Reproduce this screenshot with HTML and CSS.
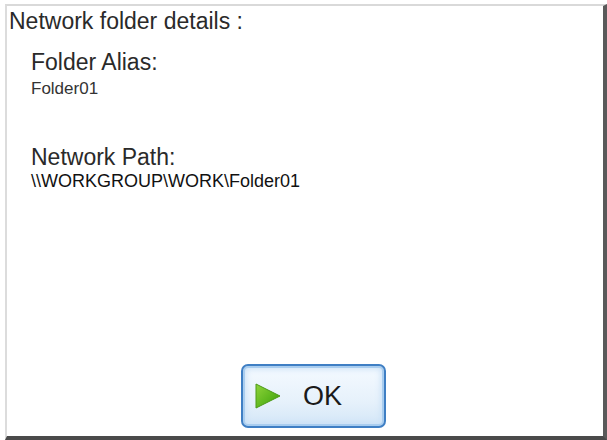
FILE: index.html
```html
<!DOCTYPE html>
<html lang="en">
<head>
    <meta charset="UTF-8">
    <meta name="viewport" content="width=device-width, initial-scale=1.0">
    <title>Network folder details</title>
    <link rel="stylesheet" href="styles.css">
</head>
<body>

    <div class="dialog">
        <h4 class="dialog-title">Network folder details :</h4>

        <div class="detail-group">
            <p class="detail-label">Folder Alias:</p>
            <p class="detail-value">Folder01</p>
        </div>

        <div class="detail-group path-group">
            <p class="detail-label">Network Path:</p>
            <p class="detail-value path-value">\\WORKGROUP\WORK\Folder01</p>
        </div>

        <div class="btn-container">
            <button class="ok-btn">
                <svg class="ok-icon" width="28" height="26" viewBox="0 0 28 26">
                    <defs>
                        <linearGradient id="playGrad" x1="0" y1="0" x2="1" y2="1">
                            <stop offset="0" stop-color="#8fd43a"/>
                            <stop offset="0.6" stop-color="#5bb51c"/>
                            <stop offset="1" stop-color="#3d8f10"/>
                        </linearGradient>
                    </defs>
                    <polygon points="2,1 26,13 2,25" fill="url(#playGrad)" stroke="#4c9a18" stroke-width="1" stroke-linejoin="round"/>
                </svg>
                <span class="ok-text">OK</span>
            </button>
        </div>
    </div>

</body>
</html>
```

FILE: styles.css
```css
body {
    margin: 0;
    background: white;
    font-family: "Liberation Sans", Arial, sans-serif;
    color: #222;
}

.dialog {
    box-sizing: border-box;
    width: 602px;
    height: 436px;
    margin: 4px 0 0 5px;
    border-top: 2px solid #d9d9d9;
    border-left: 2px solid #dcdcdc;
    border-right: 4px solid #5a5a5a;
    border-bottom: 4px solid #4a4a4a;
    padding: 2px 0 8px 2px;
    display: flex;
    flex-direction: column;
}

.dialog-title {
    margin: 0;
    font-size: 23px;
    font-weight: normal;
    line-height: 26px;
    color: #2a2a2a;
}

.detail-group {
    margin: 15px 0 0 22px;
}

.path-group {
    margin-top: 45px;
}

.detail-label {
    margin: 0;
    font-size: 23px;
    line-height: 26px;
    color: #2a2a2a;
}

.detail-value {
    margin: 4px 0 0 0;
    font-size: 17px;
    line-height: 20px;
    color: #333;
}

.path-value {
    margin-top: 1px;
    font-size: 18px;
    line-height: 21px;
    color: #111;
}

.btn-container {
    margin-top: auto;
    display: flex;
    justify-content: center;
    padding-left: 15px;
}

.ok-btn {
    box-sizing: border-box;
    width: 145px;
    height: 64px;
    display: flex;
    align-items: center;
    padding: 0 0 0 11px;
    border: 2px solid #3f7fc4;
    border-radius: 7px;
    background: linear-gradient(#f5faff, #e6f1fb 60%, #d3e6f7);
    box-shadow: inset 0 0 0 2px #a9cdef, inset 0 0 6px 3px #c9e0f6;
    cursor: pointer;
}

.ok-icon {
    display: block;
}

.ok-text {
    margin-left: 21px;
    font-family: "Liberation Sans", Arial, sans-serif;
    font-size: 27px;
    color: #1a1a1a;
}
```
